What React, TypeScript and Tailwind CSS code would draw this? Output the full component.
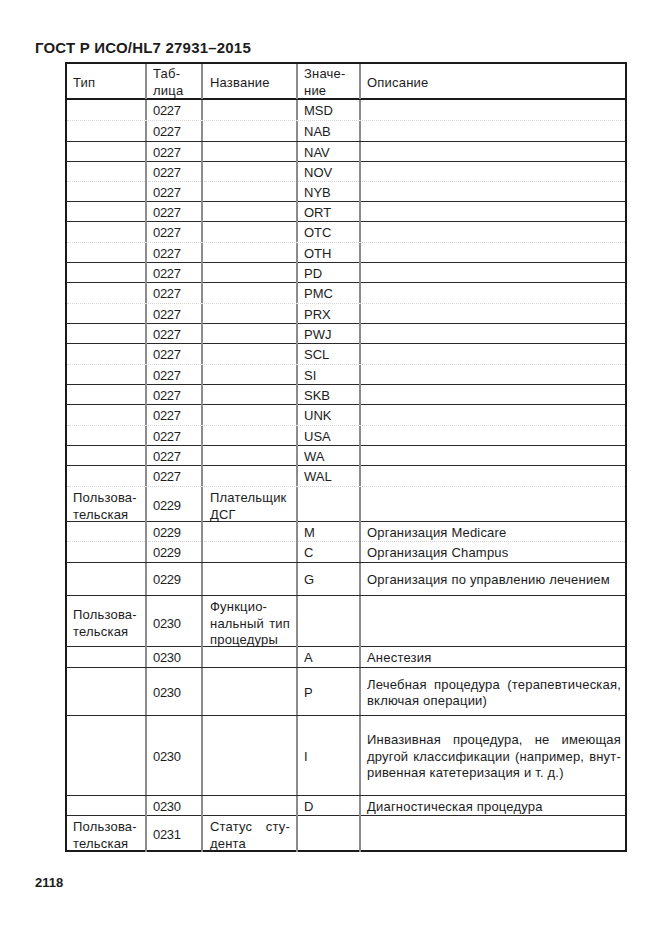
type Row = {
  h: number;
  dotted?: boolean;
  type?: string[];
  table: string;
  name?: string[];
  value?: string;
  desc?: string[];
};

const rows: Row[] = [
  { h: 21, dotted: true, table: '0227', value: 'MSD' },
  { h: 21, table: '0227', value: 'NAB' },
  { h: 20, table: '0227', value: 'NAV' },
  { h: 20, dotted: true, table: '0227', value: 'NOV' },
  { h: 20, table: '0227', value: 'NYB' },
  { h: 20, table: '0227', value: 'ORT' },
  { h: 21, dotted: true, table: '0227', value: 'OTC' },
  { h: 20, table: '0227', value: 'OTH' },
  { h: 20, table: '0227', value: 'PD' },
  { h: 21, dotted: true, table: '0227', value: 'PMC' },
  { h: 20, table: '0227', value: 'PRX' },
  { h: 20, table: '0227', value: 'PWJ' },
  { h: 21, dotted: true, table: '0227', value: 'SCL' },
  { h: 20, table: '0227', value: 'SI' },
  { h: 20, table: '0227', value: 'SKB' },
  { h: 21, dotted: true, table: '0227', value: 'UNK' },
  { h: 20, table: '0227', value: 'USA' },
  { h: 20, table: '0227', value: 'WA' },
  { h: 21, dotted: true, table: '0227', value: 'WAL' },
  { h: 35, type: ['Пользова-', 'тельская'], table: '0229', name: ['Плательщик', 'ДСГ'] },
  { h: 20, dotted: true, table: '0229', value: 'M', desc: ['Организация Medicare'] },
  { h: 21, table: '0229', value: 'C', desc: ['Организация Champus'] },
  { h: 33, table: '0229', value: 'G', desc: ['Организация по управлению лечением'] },
  { h: 51, type: ['Пользова-', 'тельская'], table: '0230', name: ['Функцио-', 'нальный тип', 'процедуры'] },
  { h: 21, table: '0230', value: 'A', desc: ['Анестезия'] },
  { h: 48, table: '0230', value: 'P', desc: ['Лечебная процедура (терапевтическая,', 'включая операции)'] },
  {
    h: 80,
    table: '0230',
    value: 'I',
    desc: ['Инвазивная процедура, не имеющая', 'другой классификации (например, внут-', 'ривенная катетеризация и т. д.)'],
  },
  { h: 20, table: '0230', value: 'D', desc: ['Диагностическая процедура'] },
  { h: 35, type: ['Пользова-', 'тельская'], table: '0231', name: ['Статус сту-', 'дента'] },
];

function Lines({ lines }: { lines?: string[] }) {
  if (!lines) return null;
  return (
    <div className="w-full">
      {lines.map((l, i) => {
        const justify = i < lines.length - 1 && l.includes(' ');
        return (
          <div key={i} className={justify ? 'text-justify [text-align-last:justify]' : ''}>
            {l}
          </div>
        );
      })}
    </div>
  );
}

const App = () => {
  return (
    <div className="w-[661px] h-[935px] bg-white text-[#1c1c1c] font-['Liberation_Sans',Arial,sans-serif] pt-[38px]">
      <div className="ml-[35px] h-[20px] leading-[20px] text-[15px] font-bold tracking-[0.2px]">
        ГОСТ Р ИСО/HL7 27931–2015
      </div>

      {/* Table */}
      <div className="ml-[65px] mt-[4px] w-[562px] border-2 border-[#1a1a1a] text-[13px] leading-[16.5px] tracking-[0.2px]">
        <div className="grid grid-cols-[78px_56px_95px_63px_1fr] h-[36px] border-b-2 border-[#1a1a1a]">
          <div className="flex items-center pl-[6px] pt-[3px]">Тип</div>
          <div className="flex items-center pl-[6px] pt-[2px] border-l-2 border-[#8c8c8c]">
            <Lines lines={['Таб-', 'лица']} />
          </div>
          <div className="flex items-center pl-[7px] pt-[3px] border-l-2 border-[#8c8c8c]">Название</div>
          <div className="flex items-center pl-[6px] pt-[2px] border-l-2 border-[#8c8c8c]">
            <Lines lines={['Значе-', 'ние']} />
          </div>
          <div className="flex items-center pl-[6px] pt-[3px] border-l-2 border-[#8c8c8c]">Описание</div>
        </div>

        {rows.map((r, i) => {
          const last = i === rows.length - 1;
          const bottom = last ? '' : r.dotted ? 'border-b border-dotted border-[#d6d6d6]' : 'border-b border-[#2a2a2a]';
          return (
            <div
              key={i}
              className={`grid grid-cols-[78px_56px_95px_63px_1fr] ${bottom}`}
              style={{ height: last ? r.h - 1 : r.h }}
            >
              <div className="flex items-center pl-[6px] pr-[4px] pt-[3px]">
                <Lines lines={r.type} />
              </div>
              <div className="flex items-center pl-[6px] pt-[3px] border-l-2 border-[#8c8c8c] tracking-[-0.3px]">
                {r.table}
              </div>
              <div className="flex items-center pl-[7px] pr-[6px] pt-[3px] border-l-2 border-[#8c8c8c]">
                <Lines lines={r.name} />
              </div>
              <div className="flex items-center pl-[6px] pt-[3px] border-l-2 border-[#8c8c8c] tracking-normal">
                {r.value}
              </div>
              <div className="flex items-center pl-[6px] pr-[4px] pt-[3px] border-l-2 border-[#8c8c8c]">
                <Lines lines={r.desc} />
              </div>
            </div>
          );
        })}
      </div>

      <div className="ml-[35px] mt-[24px] text-[13px] leading-[14px] font-bold">2118</div>
    </div>
  );
};

export default App;
